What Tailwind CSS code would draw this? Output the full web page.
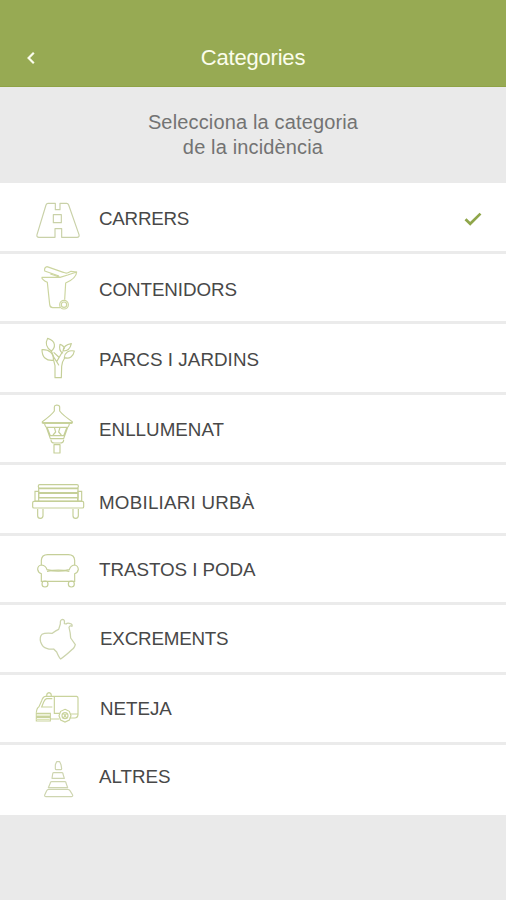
<!DOCTYPE html>
<html lang="ca">
<head>
    <meta charset="UTF-8">
    <meta name="viewport" content="width=device-width, initial-scale=1.0">
    <title>Categories</title>
    <script src="https://cdn.jsdelivr.net/npm/@tailwindcss/browser@4"></script>
</head>
<body class="bg-[#eaeaea] font-['Liberation_Sans',Arial,sans-serif]">
    <div class="w-[506px] h-[900px] overflow-hidden">

        <!-- Header -->
        <header class="h-[87px] bg-[#97aa53] border-b border-[#8fa346] grid grid-cols-[60px_1fr_60px] pt-[44px] text-[#fbfdec]">
            <button class="pl-[26px] pt-[7px] h-5">
                <svg class="w-[10px] h-[14px]" viewBox="0 0 10 14" fill="none" stroke="currentColor" stroke-width="2.2"><path d="M7.8 1.8 2.6 7l5.2 5.2"/></svg>
            </button>
            <h1 class="text-center text-[22px] leading-7 tracking-[-0.2px]">Categories</h1>
        </header>

        <div class="h-[96px] pt-[23px] text-center text-[20px] leading-[25px] tracking-[0.15px] text-[#737373]">
            <p>Selecciona la categoria<br>de la incidència</p>
        </div>

        <!-- Categories list -->
        <ul class="bg-white text-[#484848] text-[18.8px] leading-6 h-[632px]">
            <li class="flex items-start gap-[14px] pl-[25px] h-[71px] border-b-3 border-[#ebebeb]">
                <svg class="w-15 h-15 mt-[7px] shrink-0" viewBox="0 0 180 180" fill="none" stroke="#c9d1a8" stroke-width="3.5" stroke-linejoin="round">
                    <path d="M69 40h22v19h14V40h20q4 0 6 5l31 89q2 8-6 8h-46v-26H90v26H42q-8 0-6-8l27-89q2-5 6-5z"/>
                    <path d="M85 74h24v24H85z"/>
                </svg>
                <span class="mt-[24px] tracking-[-0.25px]">CARRERS</span>
                <svg class="w-[18px] h-[14px] mt-[29px] ml-auto mr-[24px]" viewBox="0 0 18 14" fill="none" stroke="#8fa64a" stroke-width="2.7"><path d="M1.5 7.2 6.2 11.8 16.5 1.6"/></svg>
            </li>
            <li class="flex items-start gap-[14px] pl-[25px] h-[70px] border-b-3 border-[#ebebeb]">
                <svg class="w-15 h-15 mt-px shrink-0" viewBox="0 0 180 180" fill="none" stroke="#ccd59f" stroke-width="3.5" stroke-linejoin="round">
                    <path d="M66 35q-9 3-7 13l43 15M66 35l49 17q8 4 14 1l9-4 17 2"/>
                    <path d="M50 67h55l23-7 27-9q-1 19-33 33l-3 50M50 67q2 8 17 15l7 66q1 10 9 10h22M76 57l28 9"/>
                    <circle cx="117" cy="149" r="13"/><circle cx="117" cy="149" r="8"/>
                </svg>
                <span class="mt-[24px] tracking-[-0.08px]">CONTENIDORS</span>
            </li>
            <li class="flex items-start gap-[14px] pl-[25px] h-[71px] border-b-3 border-[#ebebeb]">
                <svg class="w-15 h-15 mt-px shrink-0" viewBox="0 0 180 180" fill="none" stroke="#c5cf98" stroke-width="3.5" stroke-linejoin="round" stroke-linecap="round">
                    <path d="M68 40c-7 13-5 28 11 38 12-9 16-30-11-38z"/>
                    <path d="M51 74c0 22 12 34 34 32 2-21-12-33-34-32z"/>
                    <path d="M105 58c-3 12-1 21 8 26M105 58q11 3 13 13M139 56q-23 3-25 22 20 1 25-22zM148 78c-17-3-29 5-30 20 16 5 27-3 30-20z"/>
                    <path d="M79 78l8 20 8 12 17-29M86 106l4 16v36h19l1-34q0-12 9-25M87 83l14 13M95 110l6 10"/>
                </svg>
                <span class="mt-[24px] tracking-[0.05px]">PARCS I JARDINS</span>
            </li>
            <li class="flex items-start gap-[14px] pl-[25px] h-[70px] border-b-3 border-[#ebebeb]">
                <svg class="w-15 h-15 shrink-0" viewBox="0 0 180 180" fill="none" stroke="#c5cf98" stroke-width="3.5" stroke-linejoin="round">
                    <path d="M88 48V36q0-5 7-6 9 1 9 6v12q10 13 38 32v4H52v-4q28-20 36-32z"/>
                    <path d="M53 84h88" stroke="#b5c379"/>
                    <path d="M59 87q1 6 5 10l12 34h40l12-34q4-4 5-10M66 97h60l-10 25H76zM88 97l4 14-8 9M105 97l-4 14 8 9M78 134q0 10 11 10h16q11 0 11-10M87 149h18v25H87z"/>
                </svg>
                <span class="mt-[23px] tracking-[0.02px]">ENLLUMENAT</span>
            </li>
            <li class="flex items-start gap-[14px] pl-[25px] h-[71px] border-b-3 border-[#ebebeb]">
                <svg class="w-15 h-15 mt-[5px] shrink-0" viewBox="0 0 180 180" fill="none" stroke="#c5cf98" stroke-width="3.5">
                    <rect x="40" y="44" width="120" height="10" rx="4"/>
                    <path d="M41 56h118v12H41zM41 70h118v13H41zM42 84h116v9H42"/>
                    <path d="M41 64H30v29h11zM159 64h11v29h-11z"/>
                    <rect x="23" y="94" width="153" height="20" rx="4"/>
                    <path d="M38 117v20q0 8 8 8 8-1 8-8v-20M144 117v20q0 8 8 8 8-1 8-8v-20"/>
                </svg>
                <span class="mt-[26px] tracking-[0.22px]">MOBILIARI URBÀ</span>
            </li>
            <li class="flex items-start gap-[14px] pl-[25px] h-[69px] border-b-3 border-[#ebebeb]">
                <svg class="w-15 h-15 mt-[4px] shrink-0" viewBox="0 0 180 180" fill="none" stroke="#c5cf98" stroke-width="3.5">
                    <path d="M49 75V61q1-17 19-17h62q18 0 19 17v14"/>
                    <path d="M49 124V101q-10-4-11-13 0-12 12-13 12 1 16 14 34 9 67 0 4-13 15-14 11 1 12 13-1 9-11 13v23z"/>
                    <path d="M66 94q34-7 67 0"/>
                    <circle cx="60" cy="132" r="9"/><circle cx="139" cy="132" r="9"/>
                </svg>
                <span class="mt-[22px] tracking-[-0.05px]">TRASTOS I PODA</span>
            </li>
            <li class="flex items-start gap-[15px] pl-[25px] h-[70px] border-b-3 border-[#ebebeb]">
                <svg class="w-15 h-15 mt-[3px] shrink-0" viewBox="0 0 180 180" fill="none" stroke="#ccd4ac" stroke-width="3.8" stroke-linejoin="round">
                    <path d="M82 76q11-9 19-12l5-16q-1-14 7-14 7 1 5 13l5 1q5-5 13-1 7 2 5 8-5-4-9 3 5 19 5 32l14 20q-4 12-9 14-20 19-35 29-4-2-12-21l-9-9q-11 2-21-2-12-2-18-19-4-15 4-23 8-5 31-3z"/>
                </svg>
                <span class="mt-[22px] tracking-[-0.2px]">EXCREMENTS</span>
            </li>
            <li class="flex items-start gap-[15px] pl-[25px] h-[70px] border-b-3 border-[#ebebeb]">
                <svg class="w-15 h-15 mt-[3px] shrink-0" viewBox="0 0 180 180" fill="none" stroke="#c9d39c" stroke-width="3.5">
                    <path d="M88 55h67q4 1 4 5v50q-1 10-10 10h-15M88 55v51h17M88 55H61q-7 1-11 13l-8 18q-7 4-8 18M65 53q0-8 7-9 7 1 7 9M82 62H65q-5 1-9 10l-6 15h32M136 108h23"/>
                    <path d="M34 106h42v9H34zM34 118h42v11H34zM76 123h27"/>
                    <path d="M34 111h40M34 124h40" stroke="#dce4b6"/>
                    <path d="M120 94l13 6 5 13-5 13-13 6-13-6-5-13 5-13z"/><circle cx="120" cy="113" r="9"/>
                    <path d="M115 106l10 14M125 106l-10 14"/>
                </svg>
                <span class="mt-[22px] tracking-[-0.05px]">NETEJA</span>
            </li>
            <li class="flex items-start gap-[14px] pl-[25px] h-[70px]">
                <svg class="w-15 h-15 mt-[3px] shrink-0" viewBox="0 0 180 180" fill="none" stroke="#ced5b0" stroke-width="3.5" stroke-linejoin="round">
                    <path d="M91 62V50l4-9h9l4 9 2 12q0 3-3 3H94q-3 0-3-3z"/>
                    <path d="M86 74h25q3 0 3 4l4 13H81l2-13q0-4 3-4zM80 101h40q3 0 3 4l5 14H70l6-14q0-4 4-4z"/>
                    <path d="M71 124h57q5 0 7 4l8 13q1 5-4 5H63q-5 0-4-5l6-13q2-4 6-4z"/>
                </svg>
                <span class="mt-[20px] tracking-[-0.05px]">ALTRES</span>
            </li>
        </ul>
    </div>
</body>
</html>
